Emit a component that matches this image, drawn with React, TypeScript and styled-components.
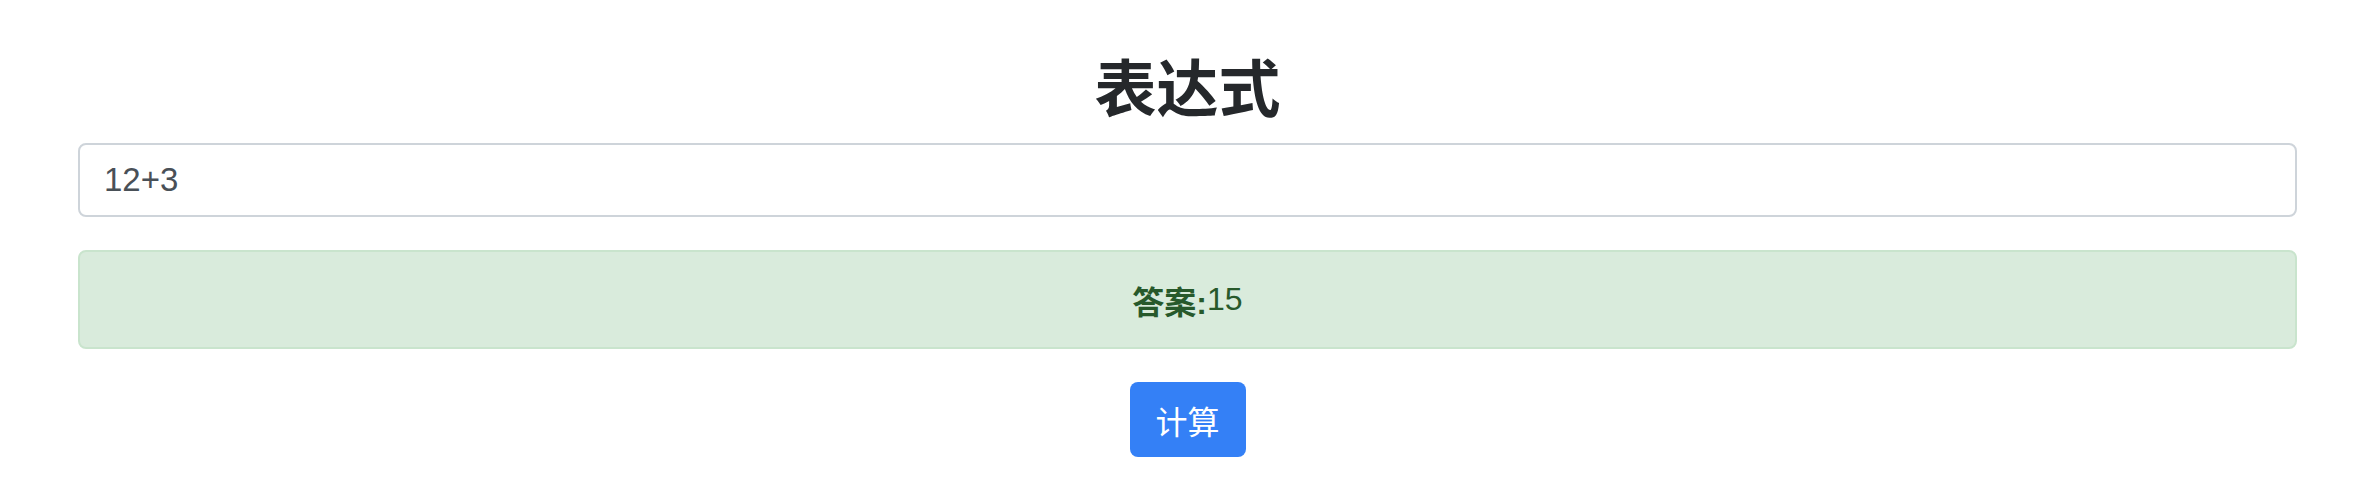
import React, { useState } from 'react';
import styled, { createGlobalStyle } from 'styled-components';

const fontStack = `"Liberation Sans", "Noto Sans CJK SC", sans-serif`;

const GlobalStyle = createGlobalStyle`
  body {
    margin: 0;
    background-color: #ffffff;
    font-family: ${fontStack};
  }
`;

const Page = styled.div`
  display: flex;
  flex-direction: column;
  padding: 54px 83px 0 78px;
`;

const Title = styled.h1`
  margin: 0 0 15px 0;
  text-align: center;
  font-size: 62px;
  line-height: 74px;
  font-weight: 700;
  color: #25282b;
`;

const ExprInput = styled.input`
  box-sizing: border-box;
  width: 100%;
  height: 74px;
  padding: 0 24px;
  border: 2px solid #ced4da;
  border-radius: 8px;
  font-family: ${fontStack};
  font-size: 33px;
  color: #495057;
  background-color: #ffffff;
  outline: none;
`;

const Answer = styled.div`
  box-sizing: border-box;
  margin-top: 33px;
  height: 99px;
  display: flex;
  align-items: center;
  justify-content: center;
  background-color: #d9ebdc;
  border: 2px solid #c9e4cd;
  border-radius: 8px;
  color: #27592b;
  font-size: 32px;
`;

const AnswerLabel = styled.strong`
  font-weight: 700;
`;

const Actions = styled.div`
  display: flex;
  justify-content: center;
  margin-top: 33px;
`;

const CalcButton = styled.button`
  box-sizing: border-box;
  width: 116px;
  height: 75px;
  border: none;
  border-radius: 8px;
  background-color: #3480f6;
  color: #ffffff;
  font-family: ${fontStack};
  font-size: 32px;
  cursor: pointer;
`;

function evaluate(expr: string): string {
  if (!/^[\d+\-*/().\s]+$/.test(expr)) return '';
  try {
    // eslint-disable-next-line no-new-func
    const value = Function(`return (${expr})`)();
    return String(value);
  } catch {
    return '';
  }
}

export default function App() {
  const [expr, setExpr] = useState('12+3');
  const [result, setResult] = useState(evaluate('12+3'));

  return (
    <>
      <GlobalStyle />
      <Page>
        <Title>表达式</Title>
        <ExprInput value={expr} onChange={(e) => setExpr(e.target.value)} />
        <Answer>
          <AnswerLabel>答案:</AnswerLabel>
          {result}
        </Answer>
        <Actions>
          <CalcButton onClick={() => setResult(evaluate(expr))}>计算</CalcButton>
        </Actions>
      </Page>
    </>
  );
}
